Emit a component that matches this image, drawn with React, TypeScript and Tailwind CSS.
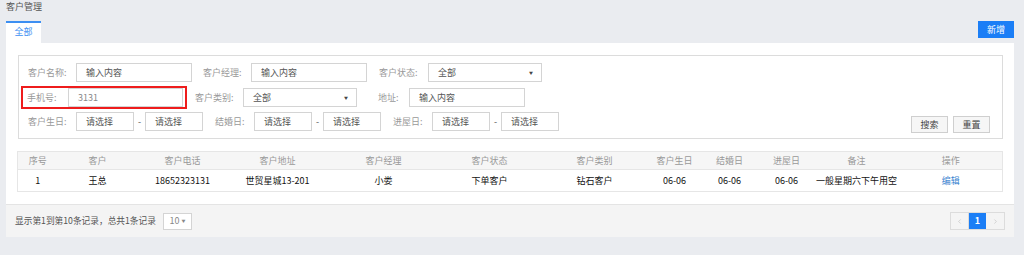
import { ChevronLeft, ChevronRight } from 'lucide-react'

const FONT = 'font-["Noto_Sans_CJK_SC",sans-serif]'

const COLUMNS = [
  { title: '序号', width: 40 },
  { title: '客户', width: 80 },
  { title: '客户电话', width: 90 },
  { title: '客户地址', width: 100 },
  { title: '客户经理', width: 112 },
  { title: '客户状态', width: 100 },
  { title: '客户类别', width: 110 },
  { title: '客户生日', width: 50 },
  { title: '结婚日', width: 60 },
  { title: '进屋日', width: 54 },
  { title: '备注', width: 86 },
  { title: '操作', width: 103 },
]

const ROW = ['1', '王总', '18652323131', '世贸星城13-201', '小娄', '下单客户', '钻石客户', '06-06', '06-06', '06-06', '一般星期六下午用空']

function Label({ text, className }: { text: string; className: string }) {
  return <span className={`text-[9px] text-[#999] leading-[19px] shrink-0 ${className}`}>{text}</span>
}

function Field({ value, width, muted }: { value: string; width: string; muted?: boolean }) {
  return (
    <div className={`h-[19px] ${width} border border-[#d4d4d4] bg-white px-[9px] text-[9px] leading-[17px] shrink-0 ${muted ? 'text-[#888]' : 'text-[#555]'}`}>
      {value}
    </div>
  )
}

function Select({ value, width }: { value: string; width: string }) {
  return (
    <div className={`h-[19px] ${width} border border-[#d4d4d4] bg-white pl-[9px] pr-[8px] flex items-center justify-between text-[9px] text-[#555] shrink-0`}>
      <span>{value}</span>
      <span className="text-[4px] text-[#444]">▼</span>
    </div>
  )
}

function Dash() {
  return <span className="w-[11px] text-center text-[9px] text-[#555] leading-[19px] shrink-0">-</span>
}

export default function App() {
  return (
    <div className={`w-[1024px] h-[255px] bg-[#eaecf0] pl-[6px] pr-[10px] overflow-hidden ${FONT}`}>
      <div className="h-[21px] pt-[1px] text-[9px] leading-[12px] text-[#555]">客户管理</div>

      <div className="h-[22px] flex justify-between items-start">
        <div className="w-[35px] h-[22px] bg-white border-t-2 border-[#3d8ff2] text-[9px] text-[#3d8ff2] text-center leading-[18px]">
          全部
        </div>
        <button className="w-[36px] h-[17px] bg-[#1b7ef6] text-white text-[9px] leading-[17px]">新增</button>
      </div>

      <div className="bg-white">
        <div className="pt-[12px] pl-[12px] pr-[11px] pb-[12px]">
          <div className="h-[84px] border border-[#dcdcdc] pt-[7px]">
            <div className="flex h-[19px] pl-[9px]">
              <Label text="客户名称:" className="w-[48px]" />
              <Field value="输入内容" width="w-[116px]" />
              <Label text="客户经理:" className="w-[48px] ml-[11px]" />
              <Field value="输入内容" width="w-[116px]" />
              <Label text="客户状态:" className="w-[49px] ml-[12px]" />
              <Select value="全部" width="w-[114px]" />
            </div>

            <div className="flex h-[23px] mt-[4px] pl-[2px] items-center">
              <div className="flex items-center border-2 border-[#ee1c1c] pl-[4px] pr-[2px] h-[23px]">
                <Label text="手机号:" className="w-[41px]" />
                <Field value="3131" width="w-[115px]" muted />
              </div>
              <Label text="客户类别:" className="w-[48px] ml-[8px]" />
              <Select value="全部" width="w-[114px]" />
              <Label text="地址:" className="w-[31px] ml-[21px]" />
              <Field value="输入内容" width="w-[116px]" />
            </div>

            <div className="flex h-[21px] mt-[3px] pl-[9px] pr-[12px] justify-between items-start">
              <div className="flex">
                <Label text="客户生日:" className="w-[48px]" />
                <Field value="请选择" width="w-[58px]" />
                <Dash />
                <Field value="请选择" width="w-[58px]" />
                <Label text="结婚日:" className="w-[39px] ml-[12px]" />
                <Field value="请选择" width="w-[58px]" />
                <Dash />
                <Field value="请选择" width="w-[58px]" />
                <Label text="进屋日:" className="w-[39px] ml-[12px]" />
                <Field value="请选择" width="w-[58px]" />
                <Dash />
                <Field value="请选择" width="w-[58px]" />
              </div>
              <div className="flex gap-[5px] mt-[4px]">
                <button className="w-[37px] h-[17px] border border-[#cfcfcf] bg-[#f6f6f6] text-[9px] text-[#444] leading-[15px]">搜索</button>
                <button className="w-[37px] h-[17px] border border-[#cfcfcf] bg-[#f6f6f6] text-[9px] text-[#444] leading-[15px]">重置</button>
              </div>
            </div>
          </div>

          <table className="mt-[12px] w-[985px] -ml-[1px] table-fixed border-collapse border border-[#e6e6e6] text-[9px]">
            <colgroup>
              {COLUMNS.map((c) => <col key={c.title} style={{ width: c.width }} />)}
            </colgroup>
            <thead>
              <tr className="h-[18px] bg-[#f6f6f6]">
                {COLUMNS.map((c) => (
                  <th key={c.title} className="font-normal text-[#999] text-center p-0">{c.title}</th>
                ))}
              </tr>
            </thead>
            <tbody>
              <tr className="h-[22px] border-t border-[#e6e6e6]">
                {ROW.map((v, i) => (
                  <td key={i} className="text-center text-[#111] p-0">{v}</td>
                ))}
                <td className="text-center text-[#3a85d0] p-0">编辑</td>
              </tr>
            </tbody>
          </table>
        </div>

        <div className="h-[33px] bg-[#f4f4f4] border-t border-[#e4e4e4] flex items-center justify-between pl-[9px] pr-[9px]">
          <div className="flex items-center">
            <span className="text-[8.7px] text-[#555]">显示第1到第10条记录，总共1条记录</span>
            <div className="ml-[7px] w-[29px] h-[17px] border border-[#d4d4d4] bg-white flex items-center justify-center gap-[2px] text-[9px] text-[#888]">
              <span>10</span>
              <span className="text-[4px]">▼</span>
            </div>
          </div>
          <div className="flex h-[18px] border border-[#dcdcdc] bg-[#f4f4f4]">
            <div className="w-[18px] flex items-center justify-center border-r border-[#dcdcdc]">
              <ChevronLeft size={7} className="text-[#bbb]" />
            </div>
            <div className="w-[17px] bg-[#1b7ef6] text-white text-[9px] font-bold flex items-center justify-center">1</div>
            <div className="w-[18px] flex items-center justify-center">
              <ChevronRight size={7} className="text-[#bbb]" />
            </div>
          </div>
        </div>
      </div>
    </div>
  )
}
